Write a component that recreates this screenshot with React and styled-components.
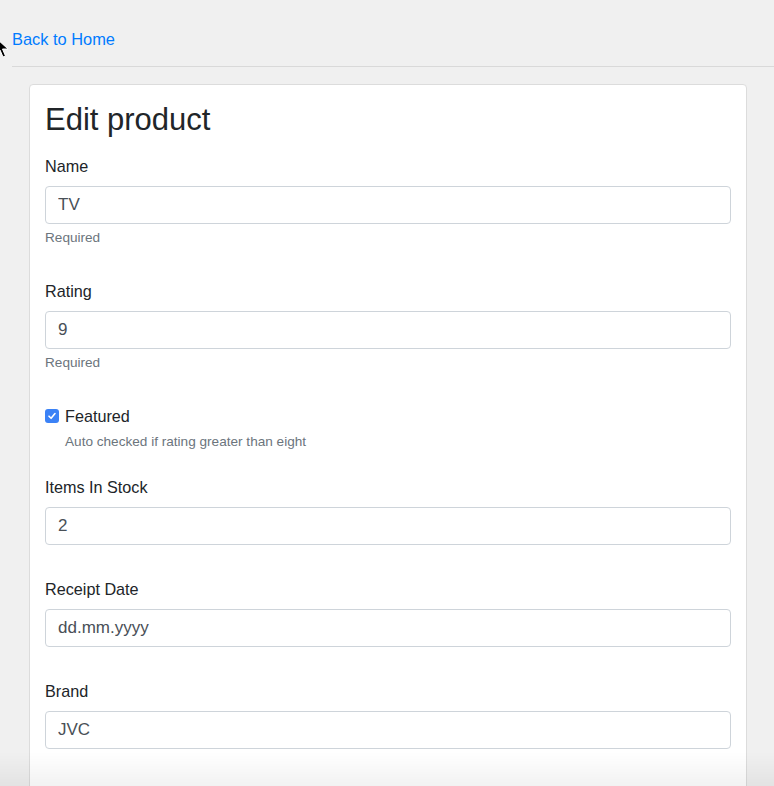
import React from 'react';
import styled, { createGlobalStyle } from 'styled-components';

const GlobalStyle = createGlobalStyle`
  html, body {
    margin: 0;
    padding: 0;
    background: #f0f0f0;
    font-family: 'Liberation Sans', Arial, sans-serif;
    color: #212529;
    overflow: hidden;
  }
  * { box-sizing: border-box; }
`;

const Page = styled.div`
  position: relative;
  height: 786px;
  padding: 27px 0 0 12px;
  overflow: hidden;

  &::after {
    content: '';
    position: fixed;
    left: 0;
    right: 0;
    bottom: 0;
    height: 34px;
    background: linear-gradient(rgba(0, 0, 0, 0), rgba(0, 0, 0, 0.05));
    pointer-events: none;
  }
`;

const HomeLink = styled.a`
  display: inline-block;
  font-size: 16.4px;
  line-height: 24px;
  color: #007bff;
  text-decoration: none;
`;

const Divider = styled.hr`
  margin: 15px 0 0;
  border: 0;
  border-top: 1px solid #d9d9d9;
`;

const Content = styled.div`
  padding: 17px 27px 0 17px;
`;

const Card = styled.div`
  background: #fff;
  border: 1px solid #dcdcdc;
  border-radius: 4px;
  padding: 15px 15px 80px;
`;

const Title = styled.h2`
  margin: 0 0 14px;
  font-size: 31px;
  font-weight: 400;
  line-height: 40px;
`;

const Group = styled.div`
  margin-bottom: ${(p) => p.$gap || 32}px;
`;

const Label = styled.label`
  display: block;
  font-size: 16.2px;
  line-height: 24px;
  margin-bottom: 8px;
`;

const Input = styled.input`
  display: block;
  width: 100%;
  height: 38px;
  padding: 6px 12px;
  font-family: inherit;
  font-size: 17px;
  color: #495057;
  border: 1px solid #ced4da;
  border-radius: 4px;
  background: #fff;
  outline: none;

  &::placeholder {
    color: #495057;
  }
`;

const Help = styled.small`
  display: block;
  margin-top: 4px;
  padding-left: ${(p) => (p.$indent ? 20 : 0)}px;
  font-size: 13.6px;
  line-height: 19px;
  color: #6c757d;
`;

const CheckRow = styled.div`
  display: flex;
  align-items: center;
  gap: 6px;
  font-size: 16.2px;
  line-height: 24px;
`;

const CheckBox = styled.span`
  display: inline-flex;
  align-items: center;
  justify-content: center;
  width: 14px;
  height: 14px;
  border-radius: 3px;
  background: #3b82f6;
`;

const Cursor = styled.svg`
  position: absolute;
  left: -5px;
  top: 37px;
`;

const Field = ({ label, value, placeholder, help }) => (
  <Group>
    <Label>{label}</Label>
    <Input defaultValue={value} placeholder={placeholder} />
    {help && <Help>{help}</Help>}
  </Group>
);

export default function App() {
  return (
    <>
      <GlobalStyle />
      <Page>
        <HomeLink href="#">Back to Home</HomeLink>
        <Divider />
        <Content>
          <Card>
            <Title>Edit product</Title>
            <Field label="Name" value="TV" help="Required" />
            <Field label="Rating" value="9" help="Required" />
            <Group $gap={24}>
              <CheckRow>
                <CheckBox>
                  <svg width="10" height="10" viewBox="0 0 10 10">
                    <path d="M2 5.2 L4.1 7.3 L8 2.6" fill="none" stroke="#fff" strokeWidth="1.6" strokeLinecap="round" strokeLinejoin="round" />
                  </svg>
                </CheckBox>
                Featured
              </CheckRow>
              <Help $indent>Auto checked if rating greater than eight</Help>
            </Group>
            <Field label="Items In Stock" value="2" />
            <Field label="Receipt Date" placeholder="dd.mm.yyyy" />
            <Field label="Brand" value="JVC" />
          </Card>
        </Content>
        <Cursor width="14" height="22" viewBox="0 0 14 22">
          <path d="M1 1 L1 17 L5 13 L8 20 L10.5 19 L7.5 12 L13 12 Z" fill="#000" stroke="#fff" strokeWidth="1" />
        </Cursor>
      </Page>
    </>
  );
}
